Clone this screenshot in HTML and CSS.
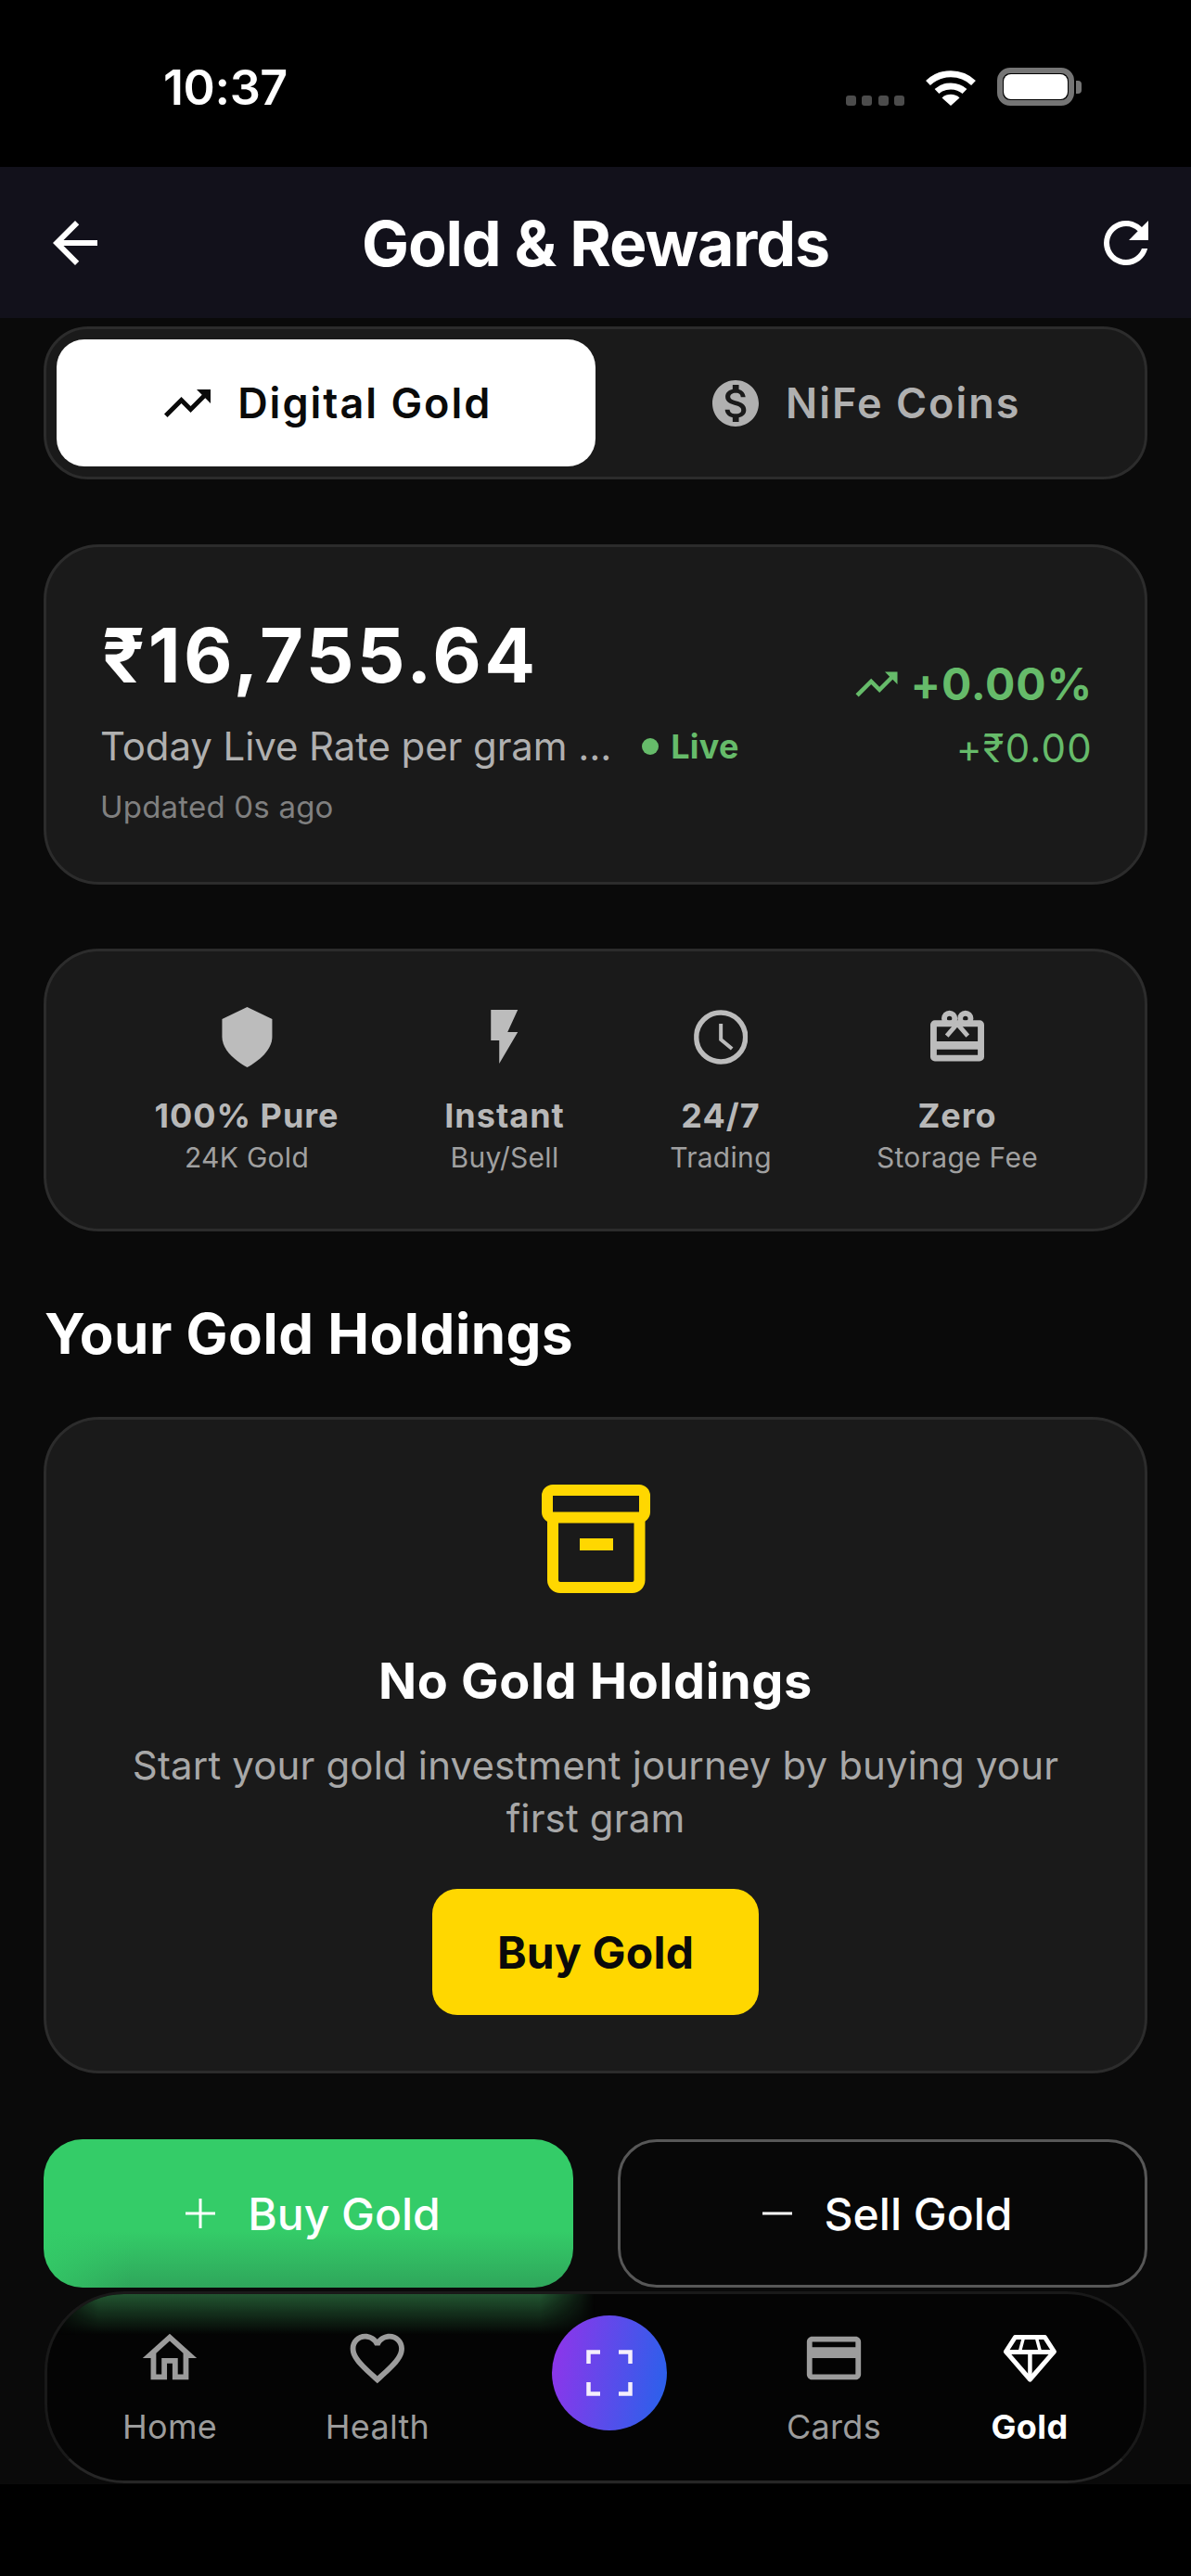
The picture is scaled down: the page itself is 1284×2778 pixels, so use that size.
FILE: index.html
```html
<!DOCTYPE html>
<html lang="en">
<head>
<meta charset="utf-8">
<title>Gold &amp; Rewards</title>
<link rel="stylesheet" href="styles.css">
</head>
<body>
<div class="screen">
  <div class="status">
    <span class="time">10:37</span>
    <div class="status-icons">
      <div class="signal"><i></i><i></i><i></i><i></i></div>
      <svg class="wifi" viewBox="0 0 56 41"><path d="M3.500 16.500C17 3.500 39 3.500 52.500 16.500" fill="none" stroke="#fff" stroke-width="7"/><path d="M13 25.500C21 18 35 18 43 25.500" fill="none" stroke="#fff" stroke-width="7"/><path d="M28 41L18.500 32.500C23 27.500 33 27.500 37.500 32.500Z" fill="#fff"/></svg>
      <div class="battery"><div class="battery-fill"></div></div>
      <div class="battery-nub"></div>
    </div>
  </div>

  <header class="header">
    <svg class="head-icon head-back" viewBox="0 0 24 24"><path d="M20 11H7.830l5.590-5.590L12 4l-8 8 8 8 1.410-1.410L7.830 13H20v-2z"/></svg>
    <h1 class="title">Gold &amp; Rewards</h1>
    <svg class="head-icon head-refresh" viewBox="0 0 24 24"><path d="M17.650 6.350C16.200 4.900 14.210 4 12 4c-4.420 0-7.990 3.580-7.990 8s3.570 8 7.990 8c3.730 0 6.840-2.550 7.730-6h-2.080c-.82 2.330-3.040 4-5.650 4-3.310 0-6-2.690-6-6s2.690-6 6-6c1.660 0 3.140.69 4.220 1.780L13 11h7V4l-2.350 2.350z"/></svg>
  </header>

  <main class="content">
    <div class="tabs card-line">
      <div class="tab tab-on">
        <svg class="tab-icon" viewBox="0 0 24 24"><path d="M16 6l2.290 2.290-4.880 4.880-4-4L2 16.590 3.410 18l6-6 4 4 6.300-6.290L22 12V6z"/></svg>
        <span>Digital Gold</span>
      </div>
      <div class="tab tab-off">
        <svg class="tab-icon" viewBox="0 0 24 24"><path d="M12 2C6.480 2 2 6.480 2 12s4.480 10 10 10 10-4.480 10-10S17.520 2 12 2zm1.410 16.090V20h-2.670v-1.930c-1.710-.36-3.160-1.460-3.270-3.400h1.960c.1 1.050.82 1.870 2.650 1.870 1.960 0 2.400-.98 2.400-1.590 0-.83-.44-1.610-2.670-2.140-2.480-.6-4.180-1.620-4.180-3.670 0-1.720 1.390-2.840 3.110-3.210V4h2.670v1.950c1.860.45 2.790 1.860 2.850 3.390H14.300c-.05-1.110-.64-1.870-2.220-1.870-1.500 0-2.400.68-2.400 1.640 0 .84.65 1.390 2.670 1.910s4.180 1.390 4.180 3.910c-.01 1.830-1.380 2.830-3.120 3.160z"/></svg>
        <span>NiFe Coins</span>
      </div>
    </div>

    <section class="card price-card">
      <div class="price-left">
        <div class="price">₹16,755.64</div>
        <div class="rate-row">
          <span class="rate-label">Today Live Rate per gram ...</span>
          <span class="live"><i class="live-dot"></i>Live</span>
        </div>
        <div class="updated">Updated 0s ago</div>
      </div>
      <div class="price-right">
        <div class="change">
          <svg class="change-icon" viewBox="0 0 24 24"><path d="M16 6l2.290 2.290-4.880 4.880-4-4L2 16.590 3.410 18l6-6 4 4 6.300-6.290L22 12V6z"/></svg>
          <span>+0.00%</span>
        </div>
        <div class="change-abs">+₹0.00</div>
      </div>
    </section>

    <section class="card info-card">
      <div class="info">
        <svg class="info-icon" viewBox="0 0 58 65"><path d="M29 0L56 13V32C56 46 42 58 29 65C16 58 2 46 2 32V13Z"/></svg>
        <b>100% Pure</b><span>24K Gold</span>
      </div>
      <div class="info">
        <svg class="info-icon" viewBox="0 0 54 65"><path d="M12 3H41L30 27H41L21 61V36H12Z"/></svg>
        <b>Instant</b><span>Buy/Sell</span>
      </div>
      <div class="info">
        <svg class="info-icon" viewBox="0 0 54 65"><circle cx="27" cy="32.500" r="26.500" fill="none" stroke="#bcbcbc" stroke-width="5.500"/><path d="M27 18V35L39 45" fill="none" stroke="#bcbcbc" stroke-width="4"/></svg>
        <b>24/7</b><span>Trading</span>
      </div>
      <div class="info">
        <svg class="info-icon" viewBox="0 -3 59 65"><path d="M5 11H54A5 5 0 0 1 59 16V51A5 5 0 0 1 54 56H5A5 5 0 0 1 0 51V16A5 5 0 0 1 5 11ZM7 18V34H52V18ZM7 43V49H52V43Z" fill-rule="evenodd"/><circle cx="21" cy="9" r="5.750" fill="none" stroke="#bcbcbc" stroke-width="6"/><circle cx="38.500" cy="9" r="5.750" fill="none" stroke="#bcbcbc" stroke-width="6"/><path d="M29.500 15L18 28M29.500 15L41 28" fill="none" stroke="#bcbcbc" stroke-width="5"/></svg>
        <b>Zero</b><span>Storage Fee</span>
      </div>
    </section>

    <h2 class="holdings-title">Your Gold Holdings</h2>

    <section class="card empty-card">
      <svg class="archive" viewBox="0 0 117 117"><rect x="6" y="6" width="105" height="29.500" rx="6" fill="none" stroke="#ffd700" stroke-width="12"/><path d="M12 35V103A8 8 0 0 0 20 111H97.500A8 8 0 0 0 105.500 103V35" fill="none" stroke="#ffd700" stroke-width="12"/><rect x="41" y="58" width="36" height="13" fill="#ffd700"/></svg>
      <h3 class="empty-title">No Gold Holdings</h3>
      <p class="empty-text">Start your gold investment journey by buying your first gram</p>
      <div class="yellow-btn">Buy Gold</div>
    </section>

    <div class="actions">
      <div class="action action-buy">
        <svg class="action-icon" viewBox="0 0 36 36"><path d="M16.500 2H19.500V16.500H34V19.500H19.500V34H16.500V19.500H2V16.500H16.500Z"/></svg>
        <span>Buy Gold</span>
      </div>
      <div class="action action-sell">
        <svg class="action-icon" viewBox="0 0 36 36"><path d="M2 16.500H34V19.500H2Z"/></svg>
        <span>Sell Gold</span>
      </div>
    </div>
  </main>

  <div class="home-area"></div>

  <nav class="nav">
    <div class="glow"></div>
    <div class="nav-item nav-home">
      <svg class="nav-icon" viewBox="0 0 24 24"><path d="M12 5.690l5 4.500V18h-2v-6H9v6H7v-7.810l5-4.500M12 3L2 12h3v8h6v-6h2v6h6v-8h3L12 3z"/></svg>
      <span>Home</span>
    </div>
    <div class="nav-item nav-health">
      <svg class="nav-icon" viewBox="0 0 24 24"><path d="M16.500 3c-1.740 0-3.410.81-4.500 2.090C10.910 3.810 9.240 3 7.500 3 4.420 3 2 5.420 2 8.500c0 3.780 3.400 6.860 8.550 11.540L12 21.350l1.450-1.320C18.600 15.360 22 12.280 22 8.500 22 5.420 19.580 3 16.500 3zm-4.400 15.550l-.1.1-.1-.1C7.140 14.240 4 11.390 4 8.500 4 6.500 5.500 5 7.500 5c1.540 0 3.040.99 3.570 2.360h1.870C13.460 5.990 14.960 5 16.500 5c2 0 3.500 1.500 3.500 3.500 0 2.890-3.140 5.740-7.900 10.050z"/></svg>
      <span>Health</span>
    </div>
    <div class="scan">
      <svg class="scan-icon" viewBox="0 0 50 50"><path d="M2.500 15V2.500H15M35 2.500H47.500V15M47.500 35V47.500H35M15 47.500H2.500V35" fill="none" stroke="#f4eefc" stroke-width="4.500"/></svg>
    </div>
    <div class="nav-item nav-cards">
      <svg class="nav-icon" viewBox="0 0 24 24"><path d="M20 4H4c-1.110 0-1.990.89-1.990 2L2 18c0 1.110.89 2 2 2h16c1.110 0 2-.89 2-2V6c0-1.110-.89-2-2-2zm0 14H4v-6h16v6zm0-10H4V6h16v2z"/></svg>
      <span>Cards</span>
    </div>
    <div class="nav-item nav-gold">
      <svg class="nav-icon nav-gem" viewBox="0 0 58 52"><path d="M13 2.500H45L55 18L29 48L3 18Z" fill="none" stroke="#fff" stroke-width="5" stroke-linejoin="round"/><path d="M3 18.500H55" fill="none" stroke="#fff" stroke-width="5"/><path d="M29 18V48" fill="none" stroke="#fff" stroke-width="4.500"/><path d="M22 3L18 18M36 3L40 18" fill="none" stroke="#fff" stroke-width="3.500"/></svg>
      <span>Gold</span>
    </div>
  </nav>
</div>
</body>
</html>
```
FILE: styles.css
```css
* { box-sizing: border-box; }
html, body { margin: 0; padding: 0; background: #000; }
body { font-family: Inter, "Noto Sans", sans-serif; }
.screen { position: relative; width: 1284px; height: 2778px; overflow: hidden; display: flex; flex-direction: column; background: #0a0a0a; }

.status { flex: none; height: 180px; background: #000; display: flex; justify-content: space-between; align-items: flex-start; padding: 64px 118px 0 176px; }
.time { color: #fff; font-size: 52px; font-weight: 600; line-height: 62px; letter-spacing: -.4px; }
.status-icons { display: flex; align-items: flex-start; margin-top: 9px; }
.signal { display: flex; gap: 6.500px; margin-top: 30px; margin-right: 22px; }
.signal i { width: 11px; height: 11px; border-radius: 3px; background: #4c4c4c; }
.wifi { width: 56px; height: 41px; margin-right: 22px; }
.battery { width: 83px; height: 41px; border: 6px solid #757575; border-radius: 14px; padding: 1px; }
.battery-fill { width: 100%; height: 100%; background: #fff; border-radius: 8px; }
.battery-nub { width: 6px; height: 14px; margin: 14px 0 0 2px; background: #757575; border-radius: 0 4px 4px 0; }

.header { flex: none; height: 163px; background: #12111b; display: grid; grid-template-columns: 1fr auto 1fr; align-items: center; padding: 0 34px 0 45px; }
.head-icon { width: 72px; height: 72px; fill: #fff; }
.head-back { justify-self: start; }
.head-refresh { justify-self: end; }
.title { margin: 0 0 0 -11px; color: #fff; font-size: 68px; font-weight: 700; letter-spacing: -1.100px; line-height: 80px; }

.content { flex: 1; min-height: 0; padding: 9px 47px 0; display: flex; flex-direction: column; overflow: hidden; }
.card-line, .card { background: #1a1a1a; border: 3px solid #2c2c2c; }
.tabs { height: 165px; border-radius: 48px; padding: 11px 12px 11px 11px; display: flex; flex: none; }
.tab { flex: 1; border-radius: 30px; display: flex; align-items: center; justify-content: center; gap: 24px; font-size: 45px; font-weight: 600; letter-spacing: 2px; }
.tab-on { background: #fff; color: #0a0a0a; }
.tab-off { color: #b0b0b0; }
.tab-icon { width: 60px; height: 60px; fill: currentColor; }

.card { flex: none; border-radius: 60px; }
.price-card { margin-top: 70px; height: 367px; padding: 0 56px 0 58px; display: flex; justify-content: space-between; }
.price { margin: 67px 0 0 2px; color: #fff; font-size: 81px; font-weight: 700; line-height: 100px; letter-spacing: 3.400px; }
.rate-row { margin-top: 21px; display: flex; align-items: center; gap: 33px; line-height: 54px; }
.rate-label { color: #b0b0b0; font-size: 42px; letter-spacing: -.1px; }
.live { color: #66bb6a; font-size: 36px; font-weight: 700; letter-spacing: .2px; display: flex; align-items: center; gap: 13px; }
.live-dot { width: 18px; height: 18px; border-radius: 50%; background: #66bb6a; }
.updated { margin-top: 18px; color: #808080; font-size: 33px; letter-spacing: .2px; line-height: 40px; }
.price-right { margin-top: 120px; display: flex; flex-direction: column; align-items: flex-end; }
.change { display: flex; align-items: center; gap: 10px; color: #66bb6a; font-size: 48px; font-weight: 700; line-height: 56px; letter-spacing: .8px; }
.change-icon { width: 54px; height: 54px; fill: #66bb6a; }
.change-abs { margin-top: 14px; color: #66bb6a; font-size: 42px; font-weight: 400; letter-spacing: 1.200px; line-height: 54px; }

.info-card { margin-top: 69px; height: 305px; position: relative; }
.info { position: absolute; top: 60px; transform: translateX(-50%); display: flex; flex-direction: column; align-items: center; white-space: nowrap; }
.info:nth-child(1) { left: 216px; }
.info:nth-child(2) { left: 494px; }
.info:nth-child(3) { left: 727px; }
.info:nth-child(4) { left: 982px; }
.info-icon { height: 65px; width: 58px; fill: #bcbcbc; }
.info b { margin-top: 29px; color: #b8b8b8; font-size: 36px; font-weight: 700; line-height: 46px; letter-spacing: 1px; }
.info span { margin-top: 2px; color: #a0a0a0; font-size: 30px; line-height: 40px; letter-spacing: .3px; }

.holdings-title { flex: none; margin: 75px 0 0; padding-left: 1px; color: #fff; font-size: 60px; font-weight: 700; line-height: 70px; letter-spacing: .5px; }
.empty-card { margin-top: 55px; height: 708px; display: flex; flex-direction: column; align-items: center; padding-top: 70px; }
.archive { width: 117px; height: 117px; flex: none; }
.empty-title { margin: 60px 0 0; color: #fff; font-size: 54px; font-weight: 700; line-height: 70px; letter-spacing: .7px; }
.empty-text { margin: 27px 0 0; width: 1060px; text-align: center; color: #a8a8a8; font-size: 42px; line-height: 57px; letter-spacing: .15px; }
.yellow-btn { margin-top: 48px; width: 352px; height: 136px; border-radius: 27px; background: #ffd700; color: #0a0a0a; display: flex; align-items: center; justify-content: center; font-size: 48px; font-weight: 700; letter-spacing: .2px; }

.actions { margin-top: 71px; display: grid; grid-template-columns: 1fr 1fr; gap: 48px; flex: none; }
.action { height: 160px; border-radius: 42px; color: #fff; display: flex; align-items: center; justify-content: center; gap: 33px; padding-left: 8px; font-size: 48px; font-weight: 500; letter-spacing: 0; }
.action-icon { width: 36px; height: 36px; fill: #fff; }
.action-buy { background: linear-gradient(100deg, #34cc68 0, rgba(52, 204, 104, 0) 20%), linear-gradient(to bottom, #34cc68 62%, #2fa65b 100%); }
.action-sell { border: 3px solid #575757; background: #070707; }

.home-area { flex: none; height: 99px; background: #000; }

.nav { position: absolute; left: 48px; top: 2471px; width: 1188px; height: 207px; border-radius: 86px; background: #040404; border: 3px solid #191919; border-bottom-color: #262626; overflow: hidden; }
.glow { position: absolute; left: 0; top: 0; width: 590px; height: 44px; background: linear-gradient(to bottom, #225631, rgba(4, 4, 4, 0)); -webkit-mask-image: linear-gradient(to right, transparent 5px, #000 55px, #000 90%, transparent 100%); mask-image: linear-gradient(to right, transparent 5px, #000 55px, #000 90%, transparent 100%); }
.nav-item { position: absolute; top: 34px; transform: translateX(-50%); display: flex; flex-direction: column; align-items: center; color: #9c9c9c; font-size: 36px; letter-spacing: .3px; line-height: 44px; }
.nav-icon { width: 70px; height: 70px; fill: #9c9c9c; margin-bottom: 17px; }
.nav-home { left: 132px; }
.nav-health { left: 356px; }
.nav-cards { left: 848px; }
.nav-gold { left: 1059px; color: #fff; font-weight: 700; letter-spacing: .4px; }
.nav-gem { width: 58px; height: 52px; margin: 10px 0 25px; }
.scan { position: absolute; left: 544px; top: 23px; width: 124px; height: 124px; border-radius: 50%; background: linear-gradient(100deg, #9333ea, #2563eb); display: flex; align-items: center; justify-content: center; }
.scan-icon { width: 50px; height: 50px; }
```
